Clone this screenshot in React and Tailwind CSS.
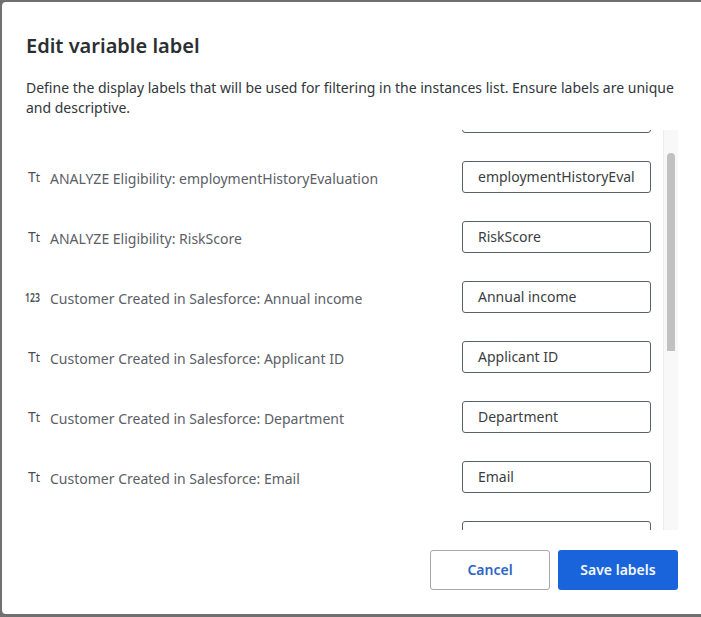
const rows = [
  ["Tt", "ANALYZE Eligibility: employmentHistoryEvaluation", "employmentHistoryEval"],
  ["Tt", "ANALYZE Eligibility: RiskScore", "RiskScore"],
  ["123", "Customer Created in Salesforce: Annual income", "Annual income"],
  ["Tt", "Customer Created in Salesforce: Applicant ID", "Applicant ID"],
  ["Tt", "Customer Created in Salesforce: Department", "Department"],
  ["Tt", "Customer Created in Salesforce: Email", "Email"],
];

function TypeIcon({ kind }) {
  return kind === "123" ? (
    <span className="relative -top-[1px] -left-[1px] w-[16px] origin-left scale-x-[0.72] text-[12px] leading-none font-semibold text-[#4a4f55]">123</span>
  ) : (
    <span className="relative -top-[2px] flex w-[16px] items-baseline pl-[2px] leading-none font-normal text-[#4a4f55]">
      <span className="text-[14px] leading-none">T</span>
      <span className="text-[12px] leading-none">t</span>
    </span>
  );
}

function Field({ value }) {
  return (
    <div className="flex h-[32px] w-[189px] items-center overflow-hidden rounded-[3px] border border-[#5c6166] bg-white pb-[2px] pl-[15px] text-[14px] whitespace-nowrap text-[#3a3e42]">
      {value}
    </div>
  );
}

export default function App() {
  return (
    <div className="h-[617px] w-[701px] overflow-hidden bg-[#707070] pt-[2px] pl-[2px] font-['Noto_Sans',sans-serif]">
      <div className="flex h-[612px] w-[720px] flex-col rounded-tl-[4px] rounded-bl-[4px] bg-white">
        <div className="h-[128px] shrink-0 pt-[30px] pr-[44px] pl-[24px]">
          <h1 className="text-[20px] leading-[28px] font-semibold text-[#2b2f33]">Edit variable label</h1>
          <p className="mt-[18px] w-[652px] text-[14px] leading-[20px] text-[#32363a]">
            Define the display labels that will be used for filtering in the instances list. Ensure labels are unique and descriptive.
          </p>
        </div>
        <div className="relative flex h-[400px] w-[676px] shrink-0 overflow-hidden">
          <div className="-mt-[43px] ml-[24px] w-[625px] shrink-0">
            <div className="flex h-[60px] items-center justify-end">
              <Field value="" />
            </div>
            {rows.map(([kind, label, value]) => (
              <div key={label} className="flex h-[60px] items-center justify-between">
                <div className="flex items-center gap-[8px] pt-[4px]">
                  <TypeIcon kind={kind} />
                  <span className="text-[14px] leading-[20px] text-[#5b6066]">{label}</span>
                </div>
                <Field value={value} />
              </div>
            ))}
            <div className="flex h-[60px] items-center justify-end">
              <Field value="" />
            </div>
          </div>
          <div className="absolute top-0 right-0 bottom-0 w-[15px] border-l border-[#ececec] bg-[#f8f8f8]">
            <div className="mt-[23px] ml-[3px] h-[198px] w-[8px] rounded-t-[4px] bg-[#c1c1c1]" />
          </div>
        </div>
        <div className="flex w-[676px] justify-end gap-[8px] pt-[20px]">
          <button className="flex h-[40px] w-[120px] items-center justify-center rounded-[3px] border border-[#a8a8a8] bg-white pb-[1px] text-[14px] font-semibold text-[#2f64c4]">
            Cancel
          </button>
          <button className="flex h-[40px] w-[120px] items-center justify-center rounded-[3px] bg-[#1a64db] pb-[1px] text-[14px] font-semibold text-[#f4f7fc]">
            Save labels
          </button>
        </div>
      </div>
    </div>
  );
}
